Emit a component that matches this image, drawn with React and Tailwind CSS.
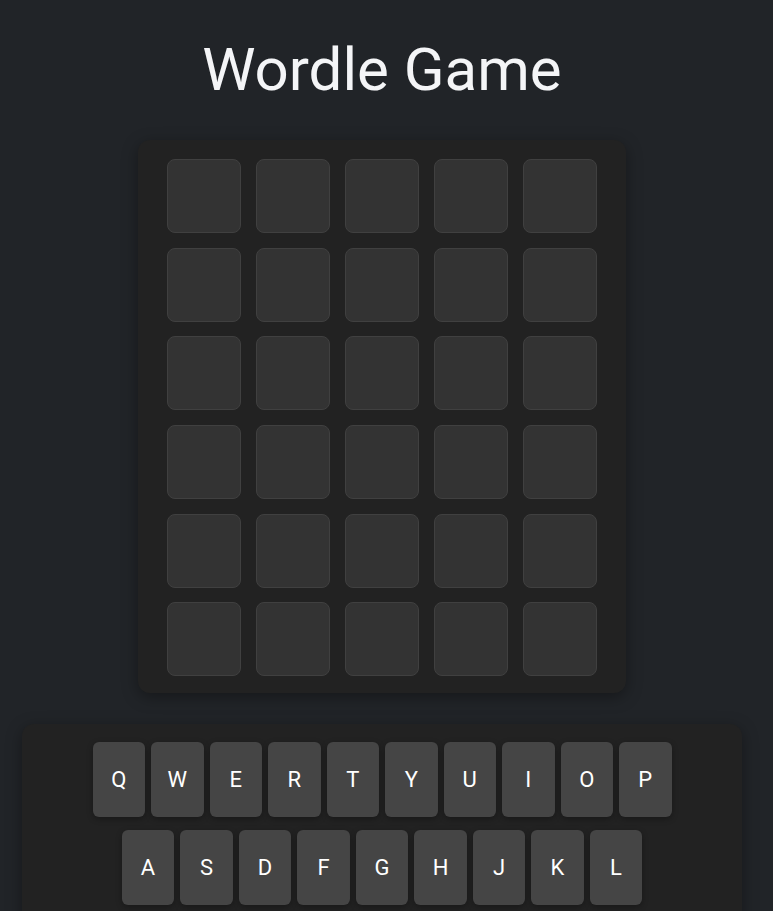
import React from "react";

const ROWS = ["QWERTYUIOP", "ASDFGHJKL", "ZXCVBNM"];

export default function App() {
  return (
    <div className="min-h-screen bg-[#212428] text-white" style={{ fontFamily: "Roboto, 'Liberation Sans', sans-serif" }}>
      <div className="w-[764px] flex flex-col items-center">
        <h1 className="mt-[35px] text-[60px] leading-[70px] font-normal text-[#f4f5f7]">Wordle Game</h1>

        {/* board */}
        <div className="mt-[35px] w-[488px] rounded-xl bg-[#222222] px-[29px] pt-[19px] pb-[17px] shadow-[0_4px_16px_rgba(0,0,0,0.35)]">
          <div className="grid grid-cols-5 gap-x-[14.7px] gap-y-[14.7px]">
            {Array.from({ length: 30 }).map((_, i) => (
              <div key={i} className="h-[74px] w-[74px] rounded-lg border border-[#404040] bg-[#333333]" />
            ))}
          </div>
        </div>

        {/* keyboard */}
        <div className="mt-[31px] w-[720px] rounded-xl bg-[#222222] pt-[18px] pb-[18px] flex flex-col items-center gap-[13px] shadow-[0_4px_16px_rgba(0,0,0,0.35)]">
          {ROWS.map((row) => (
            <div key={row} className="flex gap-[6px]">
              {row.split("").map((k) => (
                <button
                  key={k}
                  className="h-[75px] w-[52.5px] rounded-md bg-[#454545] text-[22px] text-white shadow-[0_2px_6px_rgba(0,0,0,0.3)]"
                >
                  {k}
                </button>
              ))}
            </div>
          ))}
        </div>
      </div>
    </div>
  );
}
